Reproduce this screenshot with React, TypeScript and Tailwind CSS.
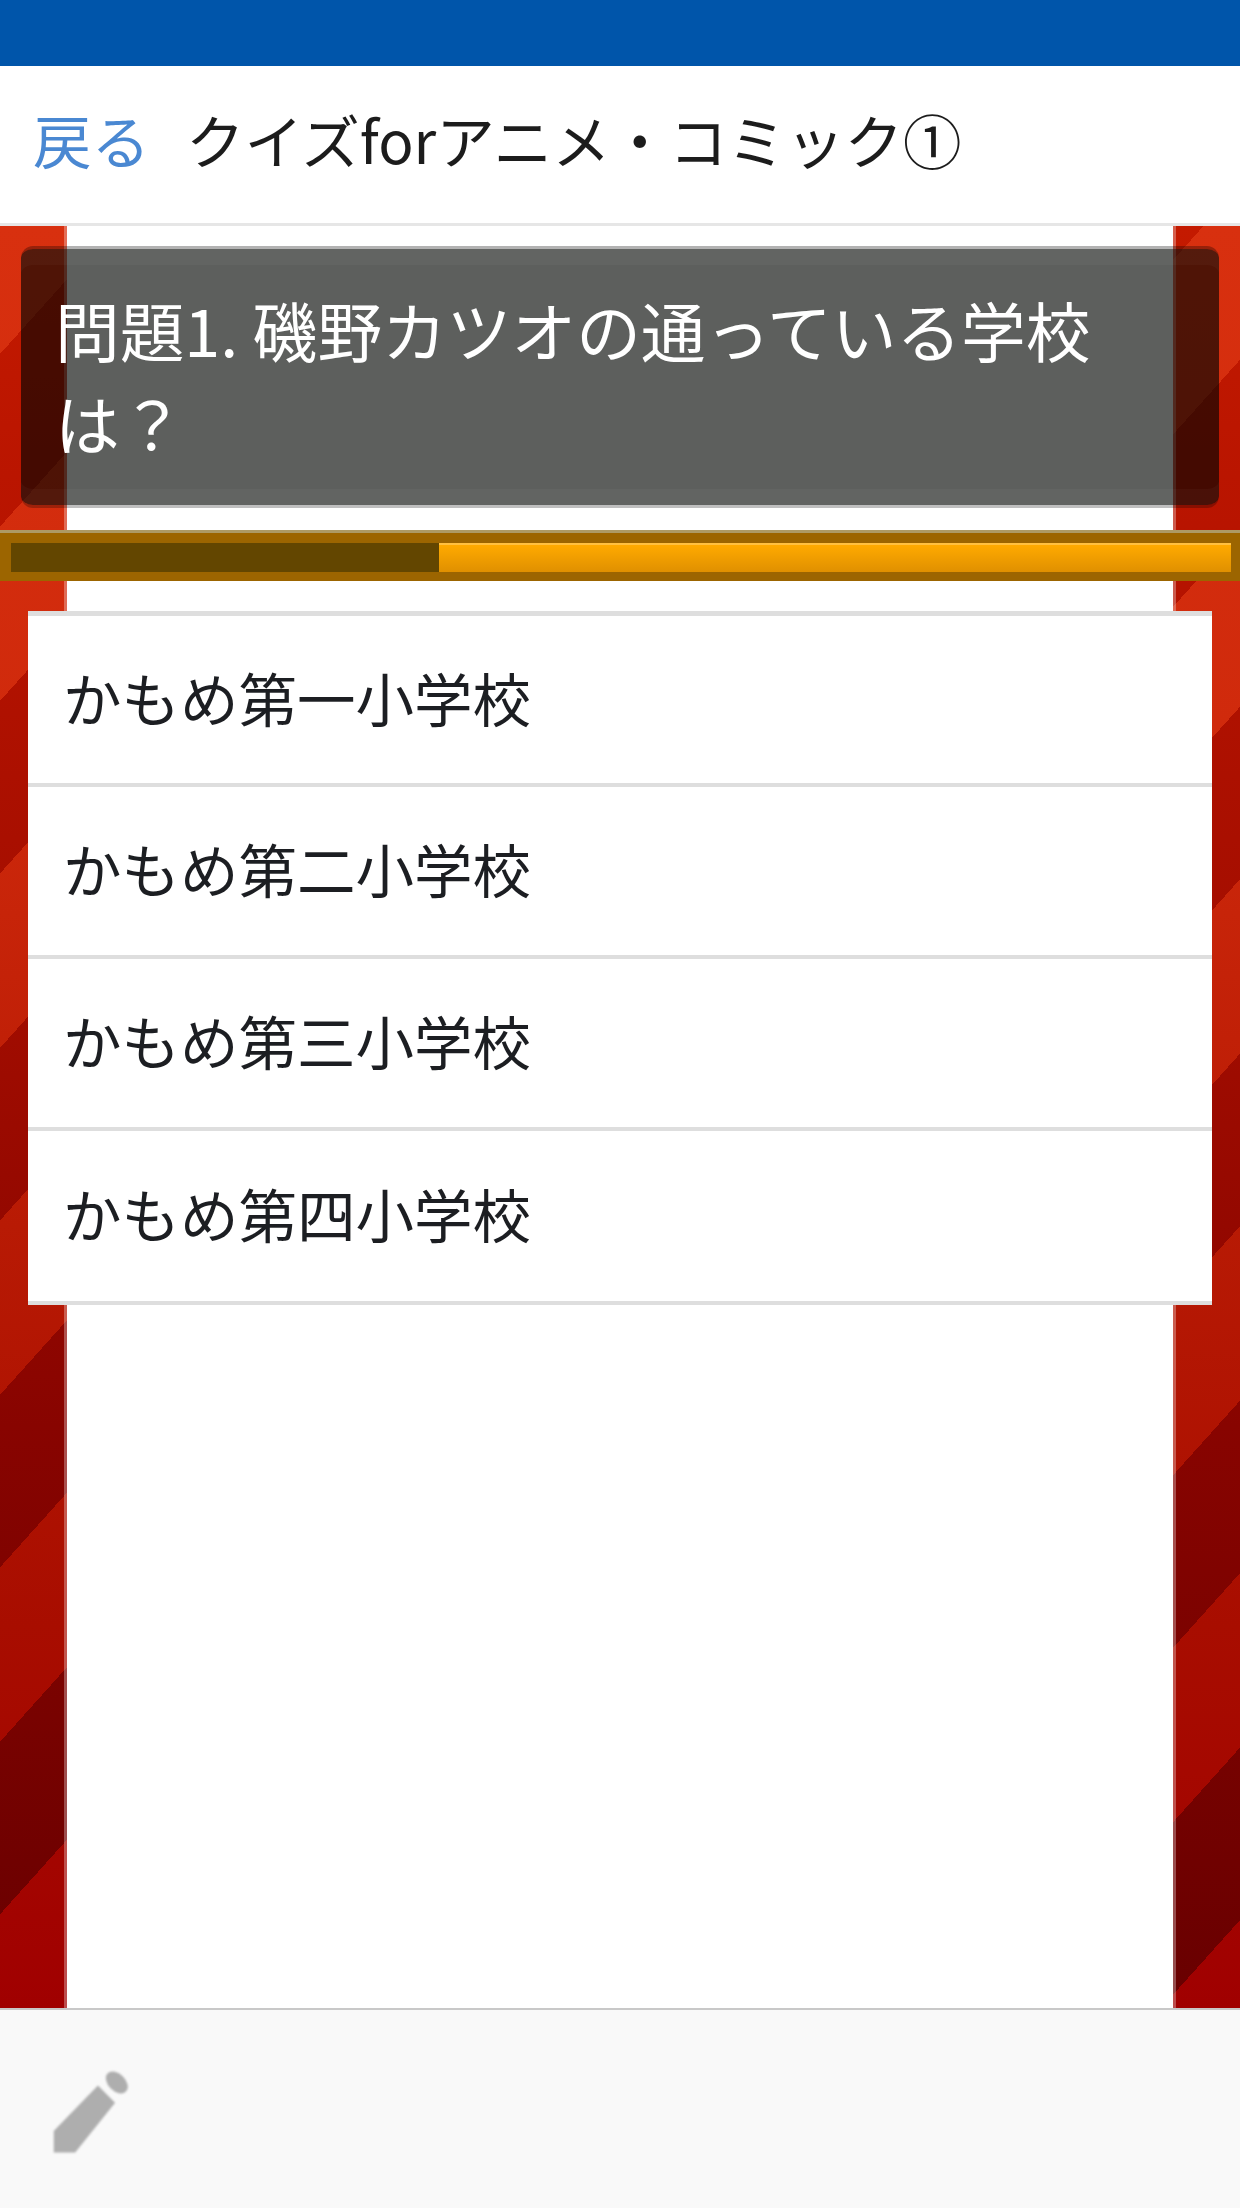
const font = 'font-["Noto_Sans_CJK_JP","Noto_Sans",sans-serif]';

const answers = ['かもめ第一小学校', 'かもめ第二小学校', 'かもめ第三小学校', 'かもめ第四小学校'];

export default function App() {
  return (
    <div className={`flex h-[2208px] w-[1240px] flex-col overflow-hidden bg-white ${font}`}>
      {/* status bar */}
      <div className="h-[66px] shrink-0 bg-[#0055aa]" />

      <header className="flex h-[160px] shrink-0 items-center border-b-[3px] border-[#e6e6e6] bg-white pb-[10px] pl-[33px]">
        <span className="text-[58.5px] leading-none font-normal text-[#4a88d2]">戻る</span>
        <h1 className="ml-[36px] text-[58.5px] leading-none font-normal text-[#1c1c1c]">クイズforアニメ・コミック①</h1>
      </header>

      <main className="relative flex-1 overflow-hidden bg-[linear-gradient(180deg,#d8300f_0px,#d02a0c_500px,#b81a04_1000px,#a80d00_1400px,#a00000_1782px)]">
        {/* darker diagonal bands */}
        <div className="absolute inset-0 bg-[linear-gradient(180deg,#c41a00_0px,#b81400_300px,#a00c00_800px,#880400_1200px,#680000_1782px)] [mask-image:repeating-linear-gradient(131.9deg,transparent_0px,transparent_85.5px,#000_85.5px,#000_200.7px,transparent_200.7px,transparent_231.7px)]" />
        {/* paper column behind the question and answers */}
        <div className="absolute inset-y-0 left-[64px] right-[64px] border-x-[3px] border-white/30 bg-white bg-clip-padding" />

        <div className="relative flex flex-col pt-[20px]">
          <div className="mx-[21px] flex h-[262px] flex-col justify-center rounded-[12px] border-t-[3px] border-b-[3px] border-t-black/30 border-b-black/25 bg-[rgba(2,5,2,0.64)] bg-clip-padding pb-[2px] pl-[34px] pr-[50px] shadow-[inset_0_16px_0_rgba(255,255,255,0.03),inset_0_-16px_0_rgba(255,255,255,0.03)]">
            <p className="text-[64.7px] leading-[93px] font-normal text-white">問題1. 磯野カツオの通っている学校は？</p>
          </div>

          {/* time left */}
          <div className="mt-[22px] flex h-[51px] flex-col justify-center border-t-[3px] border-[#ad9a66] bg-[#9c6500] pl-[11px] pr-[9px]">
            <div className="flex h-[29px] bg-[#634600]">
              <div className="w-[428px]" />
              <div className="flex-1 border-t-2 border-[#ffc040] bg-[linear-gradient(180deg,#ffaa00,#e09000)]" />
            </div>
          </div>

          <ul className="mx-[28px] mt-[30px] border-t-[5px] border-[#dedede] bg-white">
            {answers.map(answer => (
              <li key={answer} className="flex h-[172px] items-center border-b-[4px] border-[#dedede] pb-[6px] pl-[35px] text-[58.5px] font-normal text-[#1c1e22] first:h-[171px] last:h-[174px]">
                {answer}
              </li>
            ))}
          </ul>
        </div>
      </main>

      <footer className="flex h-[200px] shrink-0 items-center border-t-2 border-[#c8c8c8] bg-[#f9f9f9] pl-[40px]">
        <svg viewBox="0 0 24 24" className="h-[103px] w-[103px] fill-[#aeaeae] blur-[1px]">
          <path d="M3.2 17V22H8.2L17.5 10.4L13.5 6.4L3.2 17z" />
          <ellipse cx="17.9" cy="5.7" rx="2" ry="3" transform="rotate(-45 17.9 5.7)" />
        </svg>
      </footer>
    </div>
  );
}
